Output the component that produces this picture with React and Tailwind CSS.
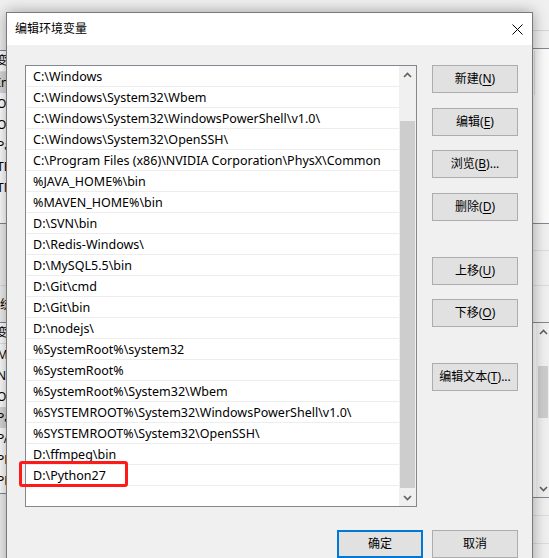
import React from "react";

const items = [
  "C:\\Windows",
  "C:\\Windows\\System32\\Wbem",
  "C:\\Windows\\System32\\WindowsPowerShell\\v1.0\\",
  "C:\\Windows\\System32\\OpenSSH\\",
  "C:\\Program Files (x86)\\NVIDIA Corporation\\PhysX\\Common",
  "%JAVA_HOME%\\bin",
  "%MAVEN_HOME%\\bin",
  "D:\\SVN\\bin",
  "D:\\Redis-Windows\\",
  "D:\\MySQL5.5\\bin",
  "D:\\Git\\cmd",
  "D:\\Git\\bin",
  "D:\\nodejs\\",
  "%SystemRoot%\\system32",
  "%SystemRoot%",
  "%SystemRoot%\\System32\\Wbem",
  "%SYSTEMROOT%\\System32\\WindowsPowerShell\\v1.0\\",
  "%SYSTEMROOT%\\System32\\OpenSSH\\",
  "D:\\ffmpeg\\bin",
  "D:\\Python27",
];

const upperRows = [
  { t: "IntelliJ IDEA", sel: true },
  { t: "OneDrive" },
  { t: "OneDriveConsumer" },
  { t: "Path" },
  { t: "TEMP" },
  { t: "TMP" },
];

const lowerRows = [
  { t: "MAVEN_HOME" },
  { t: "NUMBER_OF_PROCESSORS" },
  { t: "OS" },
  { t: "Path", sel: true },
  { t: "PATHEXT" },
  { t: "PROCESSOR_ARCHITECTURE" },
  { t: "PROCESSOR_IDENTIFIER" },
];

function Btn({ label, mn, rest = "", className = "" }) {
  return (
    <div
      className={
        "w-[86px] h-[28px] flex items-center justify-center bg-[#e1e1e1] border border-[#adadad] text-[12px] leading-none whitespace-nowrap " +
        className
      }
    >
      {label}(<span className="underline underline-offset-2">{mn}</span>){rest}
    </div>
  );
}

function Chevron({ up }) {
  return (
    <svg width="9" height="6" viewBox="0 0 9 6">
      <polyline
        points={up ? "1,5 4.5,1.5 8,5" : "1,1 4.5,4.5 8,1"}
        fill="none"
        stroke="#606060"
        strokeWidth="1.6"
      />
    </svg>
  );
}

function ParentLeft() {
  return (
    <div className="absolute left-0 top-0 w-[20px] h-full">
      <div className="absolute left-0 top-[50px] w-[20px] h-[174px] bg-white border-t border-b border-[#828790] flex flex-col whitespace-nowrap overflow-hidden">
        <div className="h-[21px] shrink-0 flex items-center ml-[-4px] border-b border-[#e5e5e5]">变量</div>
        {upperRows.map((r, i) => (
          <div
            key={i}
            className={
              "h-[21px] shrink-0 flex items-center ml-[-3px] " +
              (r.sel ? "bg-[#d9d9d9]" : "")
            }
          >
            {r.t}
          </div>
        ))}
      </div>
      <div className="absolute left-0 top-[285px] w-[20px] h-px bg-[#dcdcdc]" />
      <div className="absolute left-[-12px] top-[296px] whitespace-nowrap leading-[18px]">系统变量(S)</div>
      <div className="absolute left-0 top-[322px] w-[20px] h-[172px] bg-white border-t border-b border-[#828790] flex flex-col whitespace-nowrap overflow-hidden">
        <div className="h-[21px] shrink-0 flex items-center ml-[-4px] border-b border-[#e5e5e5]">变量</div>
        {lowerRows.map((r, i) => (
          <div
            key={i}
            className={
              "h-[21px] shrink-0 flex items-center ml-[-3px] " +
              (r.sel ? "bg-[#d9d9d9]" : "")
            }
          >
            {r.t}
          </div>
        ))}
      </div>
    </div>
  );
}

function ParentRight() {
  return (
    <div className="absolute left-[533px] top-0 w-[16px] h-full">
      <div className="absolute left-0 top-[30px] w-full h-px bg-[#d6d6d6]" />
      <div className="absolute left-0 top-[48px] w-full h-[176px] bg-[#fafafa] border-t border-b border-[#828790]">
        <div className="absolute left-[1px] top-[2px] w-px h-[44px] bg-[#e0e0e0]" />
      </div>
      <div className="absolute left-0 top-[250px] w-full h-px bg-[#dcdcdc]" />
      <div className="absolute left-0 top-[285px] w-full h-px bg-[#dcdcdc]" />
      <div className="absolute left-0 top-[322px] w-full h-[176px] bg-white border-t border-b border-[#828790]">
        <div className="absolute left-[3px] top-0 w-[14px] h-full bg-[#f0f0f0] flex flex-col items-center">
          <div className="h-[17px] flex items-center justify-center">
            <Chevron up />
          </div>
          <div className="mt-[26px] w-[10px] h-[52px] bg-[#cdcdcd]" />
          <div className="flex-1" />
          <div className="h-[17px] flex items-center justify-center">
            <Chevron />
          </div>
        </div>
      </div>
      <div className="absolute left-0 top-[515px] w-full h-px bg-[#dcdcdc]" />
      <div className="absolute left-0 top-[543px] w-full h-px bg-[#dcdcdc]" />
    </div>
  );
}

export default function App() {
  return (
    <div className="relative w-[549px] h-[558px] overflow-hidden bg-[#f0f0f0] font-['Noto_Sans','Noto_Sans_CJK_SC',sans-serif] text-[12px] text-black">
      <ParentLeft />
      <ParentRight />

      <div className="absolute left-[6px] top-[12px] w-[527px] h-[580px] border border-[#7a7a7a] bg-[#f0f0f0] shadow-[0_0_14px_rgba(0,0,0,0.35)] flex flex-col">
        <div className="h-[32px] shrink-0 bg-white flex items-center justify-between pl-[8px] pr-[9px]">
          <span className="text-[12px] leading-none">编辑环境变量</span>
          <svg width="11" height="11" viewBox="0 0 11 11">
            <path d="M0.5 0.5 L10.5 10.5 M10.5 0.5 L0.5 10.5" stroke="#000" strokeWidth="1" fill="none" />
          </svg>
        </div>

        <div className="flex flex-col pl-[18px] pr-[14px] pt-[20px]">
          <div className="flex">
            <div className="relative w-[392px] h-[442px] border border-[#828790] bg-white flex">
              <div className="flex-1 flex flex-col overflow-hidden">
                {items.map((t, i) => (
                  <div
                    key={i}
                    className="h-[21px] shrink-0 flex items-center pt-[3px] pl-[7px] border-b border-[#ededed] whitespace-nowrap text-[12.5px] leading-none"
                  >
                    {t}
                  </div>
                ))}
              </div>
              <div className="w-[17px] h-full bg-[#f0f0f0] flex flex-col items-center">
                <div className="h-[17px] w-full flex items-center justify-center">
                  <Chevron up />
                </div>
                <div className="mt-[38px] w-[15px] h-[367px] bg-[#cdcdcd]" />
                <div className="flex-1" />
                <div className="h-[17px] w-full flex items-center justify-center">
                  <Chevron />
                </div>
              </div>
            </div>

            <div className="ml-[15px] flex flex-col">
              <Btn label="新建" mn="N" />
              <Btn label="编辑" mn="E" className="mt-[15px]" />
              <Btn label="浏览" mn="B" rest="..." className="mt-[14px]" />
              <Btn label="删除" mn="D" className="mt-[15px]" />
              <Btn label="上移" mn="U" className="mt-[36px]" />
              <Btn label="下移" mn="O" className="mt-[14px]" />
              <Btn label="编辑文本" mn="T" rest="..." className="mt-[36px]" />
            </div>
          </div>

          <div className="mt-[23px] flex justify-end gap-[9px]">
            <div className="w-[86px] h-[28px] flex items-center justify-center bg-[#e1e1e1] border-2 border-[#0078d7]">
              确定
            </div>
            <div className="w-[86px] h-[28px] flex items-center justify-center bg-[#e1e1e1] border border-[#adadad]">
              取消
            </div>
          </div>
        </div>
      </div>

      <div className="absolute left-[19px] top-[461px] w-[109px] h-[26px] border-[3px] border-[#ff1a1a] rounded-[3px]" />
    </div>
  );
}
